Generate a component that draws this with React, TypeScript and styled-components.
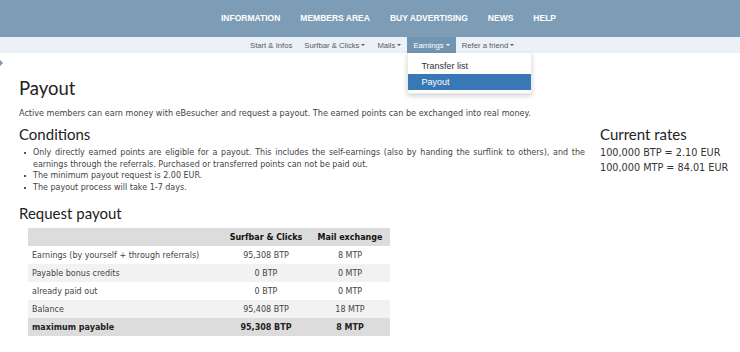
import React from "react";
import styled, { createGlobalStyle } from "styled-components";

const Global = createGlobalStyle`
  html, body { margin: 0; padding: 0; background: #fff; }
  body { font-family: "DejaVu Sans", Verdana, sans-serif; color: #444; width: 740px; overflow: hidden; }
  * { box-sizing: border-box; }
`;

const TopBar = styled.nav`
  height: 37px;
  background: #7d9db6;
  display: flex;
  align-items: center;
  gap: 20px;
  padding-left: 221px;
  font-family: "Liberation Sans", Arial, sans-serif;
`;

const TopItem = styled.a`
  color: #fff;
  font-weight: bold;
  font-size: 8.5px;
  text-decoration: none;
  padding-bottom: 1px;
`;

const SubBar = styled.div`
  height: 16px;
  background: #ebf1f7;
  display: flex;
  padding-left: 244px;
  font-family: "Liberation Sans", Arial, sans-serif;
  position: relative;
`;

const SubItem = styled.div<{ $active?: boolean }>`
  position: relative;
  display: flex;
  align-items: center;
  padding: 0 6px;
  height: 16px;
  font-size: 7.7px;
  color: ${(p) => (p.$active ? "#ffffff" : "#555c63")};
  background: ${(p) => (p.$active ? "#7295b1" : "transparent")};
`;

const Caret = styled.span`
  display: inline-block;
  margin-left: 2px;
  width: 0;
  height: 0;
  border-left: 2.5px solid transparent;
  border-right: 2.5px solid transparent;
  border-top: 2.5px solid currentColor;
`;

const Dropdown = styled.div`
  position: absolute;
  top: 16px;
  left: 0;
  width: 125px;
  background: #fff;
  padding: 5px 0 3px;
  box-shadow: 0 2px 5px rgba(0, 0, 0, 0.18);
  border: 1px solid rgba(0, 0, 0, 0.08);
  border-top: none;
  border-radius: 0 0 3px 3px;
  z-index: 5;
`;

const DropItem = styled.div<{ $active?: boolean }>`
  height: 16px;
  display: flex;
  align-items: center;
  padding-left: 13px;
  font-size: 9px;
  color: ${(p) => (p.$active ? "#fff" : "#333")};
  background: ${(p) => (p.$active ? "#3778b5" : "transparent")};
`;

const SideArrow = styled.div`
  position: absolute;
  left: 0;
  top: 60px;
  width: 0;
  height: 0;
  border-top: 3px solid transparent;
  border-bottom: 3px solid transparent;
  border-left: 3px solid #7795ae;
`;

const Main = styled.main`
  padding: 23px 0 0 19px;
`;

const H1 = styled.h1`
  font-family: Lato, "Open Sans", sans-serif;
  font-weight: 400;
  font-size: 18.5px;
  color: #222;
  margin: 0;
  line-height: 24px;
`;

const Lead = styled.p`
  font-size: 8.1px;
  margin: 8px 0 0;
  line-height: 11px;
  color: #444;
`;

const Columns = styled.div`
  display: grid;
  grid-template-columns: 566px 1fr;
  column-gap: 15px;
  margin-top: 5px;
`;

const H2 = styled.h2`
  font-family: Lato, "Open Sans", sans-serif;
  font-weight: 400;
  font-size: 15px;
  color: #222;
  margin: 0;
  line-height: 20px;
`;

const List = styled.ul`
  margin: 3px 0 0;
  padding-left: 14px;
  list-style: none;
`;

const ListItem = styled.li`
  position: relative;
  font-size: 8px;
  line-height: 11.5px;
  text-align: justify;
  color: #444;
  &::before {
    content: "";
    position: absolute;
    left: -9px;
    top: 5px;
    width: 2px;
    height: 2px;
    background: #555;
  }
`;

const Section = styled.div<{ $top?: number }>`
  margin-top: ${(p) => p.$top ?? 0}px;
`;

const Rates = styled.div`
  font-size: 9.7px;
  line-height: 15px;
  color: #333;
  margin-top: 1px;
`;

const Table = styled.table`
  margin: 5px 0 0 9px;
  border-collapse: collapse;
  width: 362px;
  font-size: 8px;
  color: #444;
`;

const Tr = styled.tr<{ $bg: string; $bold?: boolean }>`
  background: ${(p) => p.$bg};
  font-weight: ${(p) => (p.$bold ? "bold" : "normal")};
  color: ${(p) => (p.$bold ? "#222" : "#444")};
  height: 18px;
`;

const Td = styled.td<{ $center?: boolean }>`
  padding: 0 4px;
  text-align: ${(p) => (p.$center ? "center" : "left")};
  white-space: nowrap;
`;

const Th = styled.th<{ $w?: number }>`
  padding: 0 4px;
  width: ${(p) => (p.$w ? `${p.$w}px` : "auto")};
  text-align: center;
  font-weight: bold;
  color: #111;
  white-space: nowrap;
`;

const rows = [
  { label: "Earnings (by yourself + through referrals)", a: "95,308 BTP", b: "8 MTP", bg: "#ffffff" },
  { label: "Payable bonus credits", a: "0 BTP", b: "0 MTP", bg: "#f2f2f2" },
  { label: "already paid out", a: "0 BTP", b: "0 MTP", bg: "#ffffff" },
  { label: "Balance", a: "95,408 BTP", b: "18 MTP", bg: "#f2f2f2" },
  { label: "maximum payable", a: "95,308 BTP", b: "8 MTP", bg: "#dcdcdc", bold: true },
];

export default function App() {
  return (
    <>
      <Global />
      <TopBar>
        {["INFORMATION", "MEMBERS AREA", "BUY ADVERTISING", "NEWS", "HELP"].map((t) => (
          <TopItem key={t}>{t}</TopItem>
        ))}
      </TopBar>
      <SubBar>
        <SubItem>Start &amp; Infos</SubItem>
        <SubItem>
          Surfbar &amp; Clicks<Caret />
        </SubItem>
        <SubItem>
          Mails<Caret />
        </SubItem>
        <SubItem $active>
          Earnings<Caret />
          <Dropdown>
            <DropItem>Transfer list</DropItem>
            <DropItem $active>Payout</DropItem>
          </Dropdown>
        </SubItem>
        <SubItem>
          Refer a friend<Caret />
        </SubItem>
      </SubBar>
      <SideArrow />
      <Main>
        <H1>Payout</H1>
        <Lead>
          Active members can earn money with eBesucher and request a payout. The earned points can be exchanged into
          real money.
        </Lead>
        <Columns>
          <div>
            <H2>Conditions</H2>
            <List>
              <ListItem>
                Only directly earned points are eligible for a payout. This includes the self-earnings (also by handing
                the surflink to others), and the earnings through the referrals. Purchased or transferred points can not
                be paid out.
              </ListItem>
              <ListItem>The minimum payout request is 2.00 EUR.</ListItem>
              <ListItem>The payout process will take 1-7 days.</ListItem>
            </List>
            <Section $top={10}>
              <H2>Request payout</H2>
              <Table>
                <tbody>
                  <Tr $bg="#dcdcdc">
                    <Th $w={194}></Th>
                    <Th $w={88}>Surfbar &amp; Clicks</Th>
                    <Th>Mail exchange</Th>
                  </Tr>
                  {rows.map((r) => (
                    <Tr key={r.label} $bg={r.bg} $bold={r.bold}>
                      <Td>{r.label}</Td>
                      <Td $center>{r.a}</Td>
                      <Td $center>{r.b}</Td>
                    </Tr>
                  ))}
                </tbody>
              </Table>
            </Section>
          </div>
          <div>
            <H2>Current rates</H2>
            <Rates>
              100,000 BTP = 2.10 EUR
              <br />
              100,000 MTP = 84.01 EUR
            </Rates>
          </div>
        </Columns>
      </Main>
    </>
  );
}
